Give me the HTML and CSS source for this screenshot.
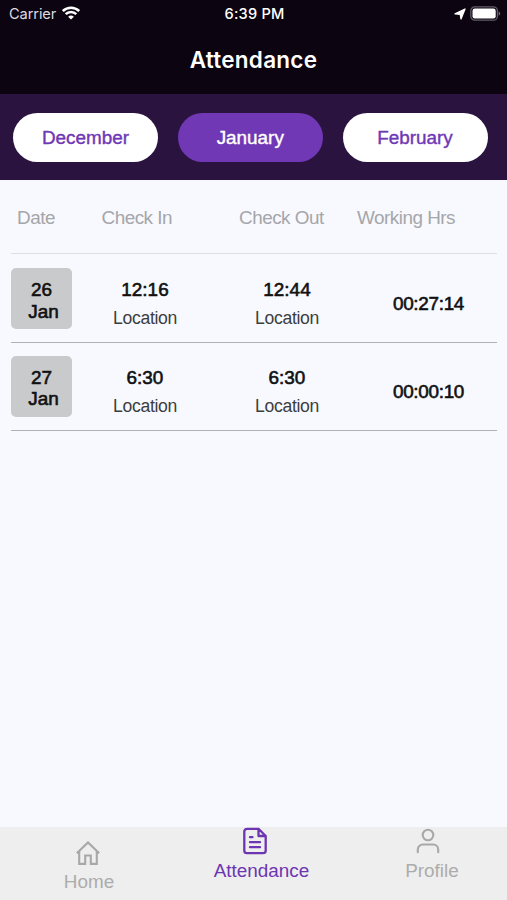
FILE: index.html
```html
<!DOCTYPE html>
<html lang="en">
<head>
<meta charset="utf-8">
<title>Attendance</title>
<link rel="stylesheet" href="styles.css">
</head>
<body>
<div class="app">
  <header class="top">
    <div class="status">
      <div class="status-left">
        <span class="carrier">Carrier</span>
        <svg class="wifi" width="18" height="14" viewBox="0 0 18 14" fill="none" stroke="#fff" stroke-width="2.6"><path d="M.8 5a11.800 11.800 0 0 1 16.400 0M3.700 8.200a7.500 7.500 0 0 1 10.600 0"/><path d="M9 13.600 6.100 10.700a4.300 4.300 0 0 1 5.800 0z" fill="#fff" stroke="none"/></svg>
      </div>
      <span class="clock">6:39 PM</span>
      <div class="status-right">
        <svg width="12" height="12" viewBox="0 0 12 12"><path d="M11 1 7 11 6.200 6.300 1 5.800z" fill="#fff" stroke="#fff" stroke-width="1.300" stroke-linejoin="round"/></svg>
        <svg width="31" height="15" viewBox="0 0 31 15"><rect x=".8" y=".8" width="26.600" height="13.400" rx="4" fill="none" stroke="#625c67" stroke-width="1.300"/><rect x="2.500" y="2.500" width="23.200" height="10" rx="2.300" fill="#fff"/><path d="M28.700 5.200q3 2.300 0 4.600z" fill="#77717b"/></svg>
      </div>
    </div>
    <h1>Attendance</h1>
  </header>
  <nav class="months">
    <button class="month">December</button>
    <button class="month active">January</button>
    <button class="month">February</button>
  </nav>
  <main>
    <div class="head">
      <span>Date</span><span>Check In</span><span>Check Out</span><span>Working Hrs</span>
    </div>
    <div class="row">
      <div class="date"><span>26</span><span class="mon">Jan</span></div>
      <div class="cell"><b>12:16</b><span>Location</span></div>
      <div class="cell"><b>12:44</b><span>Location</span></div>
      <div class="hours">00:27:14</div>
    </div>
    <div class="row">
      <div class="date"><span>27</span><span class="mon">Jan</span></div>
      <div class="cell"><b>6:30</b><span>Location</span></div>
      <div class="cell"><b>6:30</b><span>Location</span></div>
      <div class="hours">00:00:10</div>
    </div>
  </main>
  <footer class="tabs">
    <div class="tab home">
      <svg width="26" height="26" viewBox="0 0 26 26" fill="none" stroke="#a8a8a8" stroke-width="2.100"><path d="M1.800 13.300 13 2.500l11.200 10.800M4.200 11.500v12.400h6v-8.400h5.600v8.400h6V11.500"/></svg>
      <span>Home</span>
    </div>
    <div class="tab attendance">
      <svg width="26" height="28" viewBox="0 0 26 28" fill="none" stroke="#6c35b1" stroke-width="2.300" stroke-linejoin="round" stroke-linecap="round"><path d="M16.500 1.800H5A2.700 2.700 0 0 0 2.300 4.500v19A2.700 2.700 0 0 0 5 26.200h16a2.700 2.700 0 0 0 2.700-2.700V9zM16.500 1.800V9h7.200M8 10.200h2.500M8 15.200h10M8 20.200h10"/></svg>
      <span>Attendance</span>
    </div>
    <div class="tab profile">
      <svg width="26" height="28" viewBox="0 0 26 28" fill="none" stroke="#a8a8a8" stroke-width="2.100" stroke-linecap="round"><circle cx="13" cy="8" r="5.300"/><path d="M2.800 25.300v-2.800a5 5 0 0 1 5-5h10.400a5 5 0 0 1 5 5v2.800"/></svg>
      <span>Profile</span>
    </div>
  </footer>
</div>
</body>
</html>
```
FILE: styles.css
```css
* { box-sizing: border-box; }
body {
  margin: 0;
  font-family: "Liberation Sans", Arial, sans-serif;
  font-size: 18.9px;
}
svg { display: block; flex: none; }
.app {
  width: 507px;
  height: 900px;
  display: flex;
  flex-direction: column;
  background: #f8f9fe;
}
.top {
  height: 94px;
  background: #0c0410;
  color: #fff;
  font-family: Inter, sans-serif;
}
.status {
  height: 28px;
  padding: 0 6px 0 9px;
  display: grid;
  grid-template-columns: 1fr auto 1fr;
  align-items: center;
  font-size: 14.6px;
}
.status-left, .status-right { display: flex; align-items: center; }
.status-left { gap: 6px; }
.status-right { justify-content: flex-end; gap: 4px; }
.wifi { margin-top: -2px; }
.status-right svg { margin-top: -1px; }
.carrier { color: #dddbe0; letter-spacing: -0.1px; }
.clock { margin-left: -1px; font-weight: 500; letter-spacing: 0.2px; }
h1 {
  margin: 16px 0 0;
  line-height: 32px;
  text-align: center;
  font-size: 22.5px;
  font-weight: 600;
  letter-spacing: 0.25px;
}
.months {
  height: 86px;
  padding: 0 19.5px 0 13px;
  display: flex;
  justify-content: space-between;
  align-items: center;
  background: #2a143f;
}
.month {
  width: 145px;
  height: 49px;
  padding: 2px 0 0;
  border: 0;
  border-radius: 25px;
  background: #fff;
  color: #7038b5;
  font: inherit;
  -webkit-text-stroke: 0.4px currentColor;
}
.month.active { background: #7038b5; color: #fff; }
main { flex: 1; padding: 0 10px 0 11px; }
.head {
  height: 74px;
  padding: 2px 0 0 6px;
  display: grid;
  grid-template-columns: 84.5px 137.5px 118px 1fr;
  align-items: center;
  border-bottom: 1px solid #dddfe5;
  color: #a5a6aa;
  letter-spacing: -0.5px;
}
.row {
  height: 87.5px;
  padding-top: 12.5px;
  display: grid;
  grid-template-columns: 61px 146px 138px 1fr;
  border-bottom: 1px solid #b0b1b6;
}
.head + .row { height: 89px; padding-top: 14px; }
.date {
  height: 61px;
  padding-top: 11px;
  display: flex;
  flex-direction: column;
  align-items: center;
  border-radius: 5px;
  background: #c9cacb;
  color: #111;
  line-height: 21.5px;
  -webkit-text-stroke: 0.6px currentColor;
}
.mon { padding-left: 4px; }
.cell {
  display: flex;
  flex-direction: column;
  align-items: center;
}
.cell b {
  margin-top: 11px;
  line-height: 22px;
  font-weight: 400;
  color: #111;
  -webkit-text-stroke: 0.6px currentColor;
}
.cell span {
  margin-top: 7px;
  line-height: 20px;
  font-size: 17.6px;
  letter-spacing: -0.3px;
  color: #3c3d40;
}
.hours {
  padding: 25px 0 0 4px;
  line-height: 22px;
  text-align: center;
  color: #111;
  letter-spacing: -0.3px;
  -webkit-text-stroke: 0.6px currentColor;
}
.tabs {
  height: 73px;
  padding-left: 1px;
  display: flex;
  background: #eee;
  color: #acacac;
}
.tab {
  display: flex;
  flex-direction: column;
  align-items: center;
}
.tab span { margin-top: 5px; line-height: 22px; }
.home { width: 173px; padding: 13px 0 0 3px; }
.home svg { margin-right: 2px; }
.attendance { width: 162px; padding-left: 13px; color: #6c35b1; }
.attendance svg { margin-right: 13px; }
.profile { width: 171px; padding-left: 21px; }
.profile svg { margin-right: 8px; }
```
